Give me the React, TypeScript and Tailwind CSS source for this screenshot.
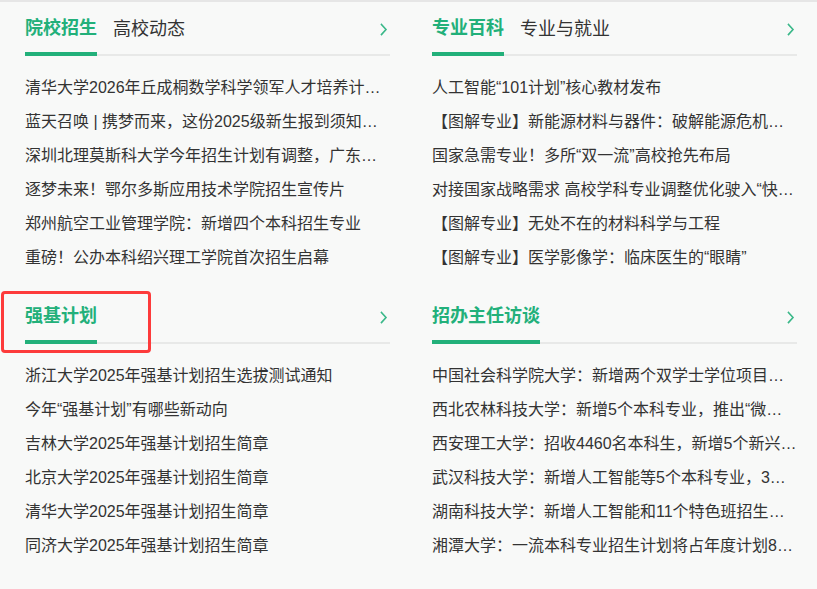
import React from "react";

type Section = {
  tabs: string[];
  items: string[];
};

const sections: Section[] = [
  {
    tabs: ["院校招生", "高校动态"],
    items: [
      "清华大学2026年丘成桐数学科学领军人才培养计划招生简章",
      "蓝天召唤 | 携梦而来，这份2025级新生报到须知请查收",
      "深圳北理莫斯科大学今年招生计划有调整，广东省内扩招",
      "逐梦未来！鄂尔多斯应用技术学院招生宣传片",
      "郑州航空工业管理学院：新增四个本科招生专业",
      "重磅！公办本科绍兴理工学院首次招生启幕",
    ],
  },
  {
    tabs: ["专业百科", "专业与就业"],
    items: [
      "人工智能“101计划”核心教材发布",
      "【图解专业】新能源材料与器件：破解能源危机的关键",
      "国家急需专业！多所“双一流”高校抢先布局",
      "对接国家战略需求 高校学科专业调整优化驶入“快车道”",
      "【图解专业】无处不在的材料科学与工程",
      "【图解专业】医学影像学：临床医生的“眼睛”",
    ],
  },
  {
    tabs: ["强基计划"],
    items: [
      "浙江大学2025年强基计划招生选拔测试通知",
      "今年“强基计划”有哪些新动向",
      "吉林大学2025年强基计划招生简章",
      "北京大学2025年强基计划招生简章",
      "清华大学2025年强基计划招生简章",
      "同济大学2025年强基计划招生简章",
    ],
  },
  {
    tabs: ["招办主任访谈"],
    items: [
      "中国社会科学院大学：新增两个双学士学位项目，扩大招生",
      "西北农林科技大学：新增5个本科专业，推出“微专业”",
      "西安理工大学：招收4460名本科生，新增5个新兴专业",
      "武汉科技大学：新增人工智能等5个本科专业，3个专业停招",
      "湖南科技大学：新增人工智能和11个特色班招生计划",
      "湘潭大学：一流本科专业招生计划将占年度计划80%以上",
    ],
  },
];

function Chevron() {
  return (
    <svg width="8" height="13" viewBox="0 0 8 13" className="mr-[2px] mt-[3px]">
      <polyline
        points="1.5,1.5 6,6.5 1.5,11.5"
        fill="none"
        stroke="#3ab889"
        strokeWidth="1.6"
        strokeLinecap="square"
      />
    </svg>
  );
}

function Block({ s }: { s: Section }) {
  return (
    <div className="flex flex-col">
      <div className="flex h-[54px] items-stretch border-b-2 border-[#e8e9e8]">
        {s.tabs.map((t, i) =>
          i === 0 ? (
            <div
              key={t}
              className="mb-[-2px] flex items-center border-b-4 border-[#22b07a] pt-[2px] text-[18px] font-bold text-[#22b07a]"
            >
              {t}
            </div>
          ) : (
            <div
              key={t}
              className="ml-4 flex items-center pt-[2px] text-[18px] text-[#333333]"
            >
              {t}
            </div>
          )
        )}
        <div className="ml-auto flex items-center">
          <Chevron />
        </div>
      </div>
      <ul className="py-[15px]">
        {s.items.map((it) => (
          <li
            key={it}
            className="h-[34px] truncate text-[16px] leading-[34px] text-[#333333]"
          >
            {it}
          </li>
        ))}
      </ul>
    </div>
  );
}

export default function App() {
  return (
    <div
      className="relative h-[589px] w-[817px] overflow-hidden border-t-2 border-[#e6e6e6] bg-[#f8f9f8]"
      style={{ fontFamily: '"Liberation Sans", "Noto Sans CJK SC", sans-serif' }}
    >
      <div className="grid grid-cols-[365px_365px] gap-x-[42px] pl-[25px]">
        {sections.map((s) => (
          <Block key={s.tabs[0]} s={s} />
        ))}
      </div>
      <div className="pointer-events-none absolute left-[1px] top-[289px] h-[62px] w-[150px] rounded-[4px] border-[3px] border-[#fd3b3b]" />
    </div>
  );
}
